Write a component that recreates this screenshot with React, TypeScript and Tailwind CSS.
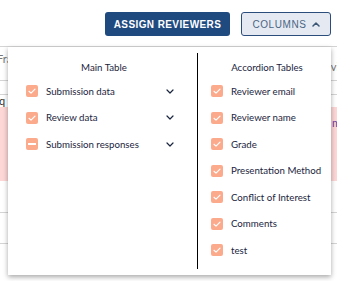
import React from "react";

const mainRows = [
  { label: "Submission data", state: "checked" },
  { label: "Review data", state: "checked" },
  { label: "Submission responses", state: "partial" },
];

const accordionRows = [
  "Reviewer email",
  "Reviewer name",
  "Grade",
  "Presentation Method",
  "Conflict of Interest",
  "Comments",
  "test",
];

function Box({ state }: { state: string }) {
  return (
    <span className="flex h-[12px] w-[12px] shrink-0 items-center justify-center rounded-[2px] bg-[#fcaa8c]">
      {state === "partial" ? (
        <span className="h-[2px] w-[8px] bg-white" />
      ) : (
        <svg width="12" height="12" viewBox="0 0 12 12" fill="none">
          <path d="M3 6.3 L5 8.1 L9 4.1" stroke="white" strokeWidth="1.2" strokeLinecap="round" strokeLinejoin="round" />
        </svg>
      )}
    </span>
  );
}

function ChevronDown() {
  return (
    <svg width="8" height="5" viewBox="0 0 8 5" fill="none">
      <path d="M1 1 L4 4 L7 1" stroke="#1b2540" strokeWidth="1.2" strokeLinecap="round" strokeLinejoin="round" />
    </svg>
  );
}

export default function App() {
  return (
    <div className="relative h-[281px] w-full overflow-hidden bg-white font-['Lato',sans-serif]">
      {/* toolbar */}
      <div className="flex h-[46px] items-start justify-end gap-[11px] pr-[6px] pt-[12px] font-['Liberation_Sans',Arial,sans-serif]">
        <button className="h-[24px] w-[125px] rounded-[3px] bg-[#1f4a80] text-[10px] font-bold tracking-[0.4px] text-white">
          ASSIGN REVIEWERS
        </button>
        <button className="flex h-[24px] w-[90px] items-center justify-center gap-[5px] rounded-[3px] border border-[#2a4d7c] bg-[#e5eaf2] text-[10px] tracking-[0.6px] text-[#4b6584]">
          COLUMNS
          <svg width="8" height="5" viewBox="0 0 8 5" fill="none">
            <path d="M1 4 L4 1 L7 4" stroke="#3c5676" strokeWidth="1.5" strokeLinecap="round" strokeLinejoin="round" />
          </svg>
        </button>
      </div>

      {/* table behind the menu */}
      <div className="border-t border-[#d4d4d4] text-[11px] text-[#777]">
        <div className="flex h-[34px] items-center justify-between border-b border-[#d4d4d4] pb-[8px]">
          <span className="-ml-[3px]">Fragen</span>
          <span className="-mr-[8px] mt-[16px]">Revie</span>
        </div>
        <div className="h-[14px] border-b border-[#d4d4d4]" />
        <div className="flex h-[12px] items-center">
          <span className="-ml-px text-[#333]">q</span>
        </div>
        <div className="flex h-[74px] items-start justify-end bg-[#fdd6d6] pt-[8px]">
          <span className="-mr-[4px] text-[#6b3ca8]">m</span>
        </div>
        <div className="h-[32px] border-b border-[#d4d4d4]" />
        <div className="h-[31px] border-b border-[#d4d4d4]" />
      </div>

      {/* columns menu */}
      <div className="absolute left-[8px] top-[47px] flex h-[228px] w-[323px] bg-white py-[6px] text-[9.7px] text-[#1b2540] shadow-[0_2px_5px_rgba(0,0,0,0.35)]">
        <div className="flex w-[189px] flex-col pl-[18px] pr-[23px]">
          <div className="h-[25px] pl-[8px] pt-[8px] text-center leading-[12px]">Main Table</div>
          {mainRows.map((row) => (
            <div key={row.label} className="flex h-[26.5px] items-center">
              <Box state={row.state} />
              <span className="ml-[8px] flex-1">{row.label}</span>
              <ChevronDown />
            </div>
          ))}
        </div>
        <div className="w-px bg-black" />
        <div className="flex flex-1 flex-col pl-[13px]">
          <div className="h-[25px] pr-[8px] pt-[8px] text-center leading-[12px]">Accordion Tables</div>
          {accordionRows.map((label) => (
            <div key={label} className="flex h-[26.5px] items-center">
              <Box state="checked" />
              <span className="ml-[8px]">{label}</span>
            </div>
          ))}
        </div>
      </div>
    </div>
  );
}
